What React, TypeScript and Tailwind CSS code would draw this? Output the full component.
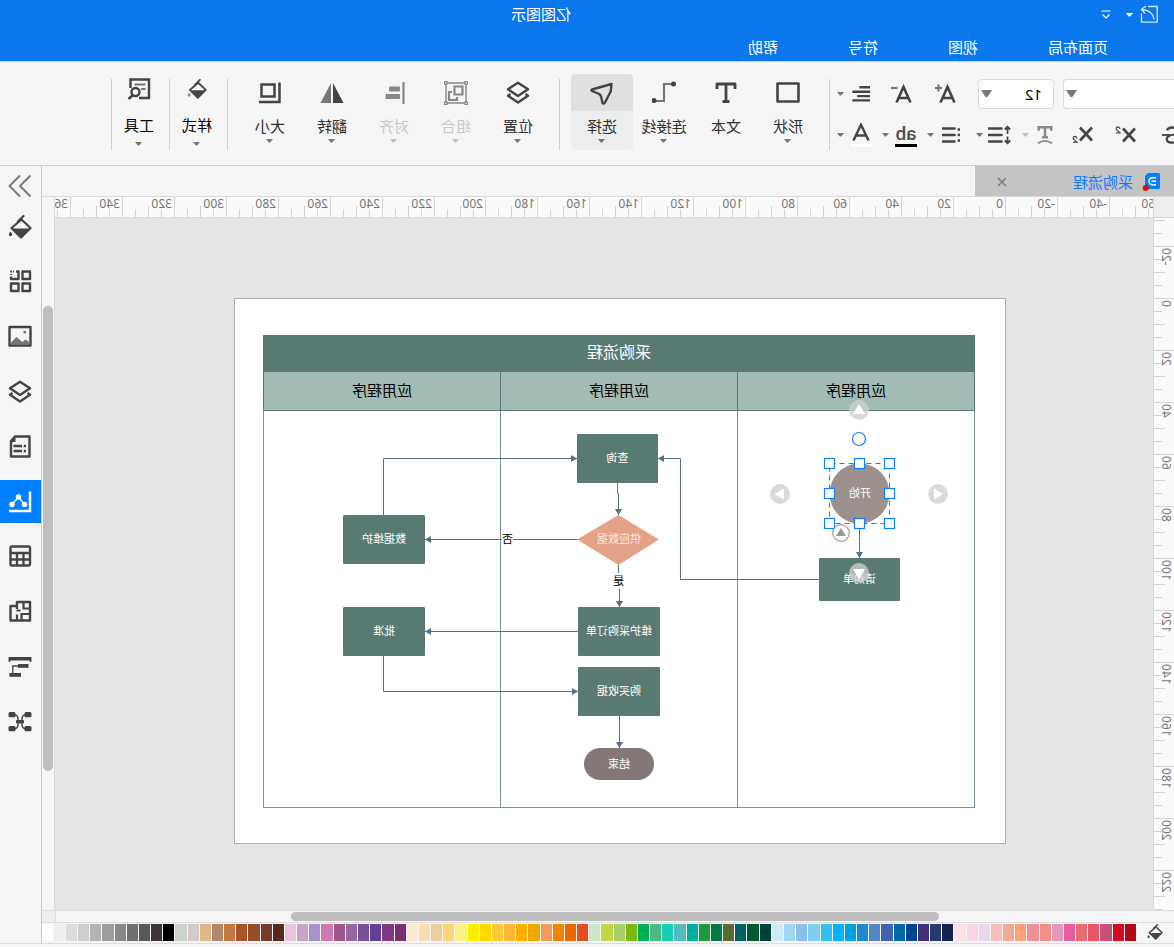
import type { ReactNode } from "react";

const INK = "#444444";
const GREY = "#888888";

function Icon({ className = "size-6", children }: { className?: string; children: ReactNode }) {
  return (
    <svg viewBox="0 0 24 24" className={className} fill="none" stroke={INK} strokeWidth="2.2" aria-hidden="true">
      {children}
    </svg>
  );
}

function Caret({ className = "text-[#777777]" }: { className?: string }) {
  return (
    <svg viewBox="0 0 7 4" className={`h-1 w-[7px] shrink-0 ${className}`} aria-hidden="true">
      <path d="M0 0h7L4.2 3.6H2.8z" fill="currentColor" />
    </svg>
  );
}

function CaretButton({ label, className, tone }: { label: string; className: string; tone?: string }) {
  return (
    <button aria-label={label} className={`flex h-6 w-[10px] items-center justify-center ${className}`}>
      <Caret className={tone} />
    </button>
  );
}

function Bucket({ className, drop = INK }: { className: string; drop?: string }) {
  return (
    <Icon className={className}>
      <path d="M10.5 4.5 20.5 13 11 22.500 1.500 13z" strokeLinejoin="round" />
      <path d="M2 13.500h18L11 22.500z" fill={INK} stroke="none" />
      <path d="M8.500 1l5.500 5.500" strokeLinecap="round" />
      <path d="M21.500 16.500c1.300 1.700 1.700 2.400 1.700 3.100a1.700 1.700 0 0 1-3.400 0c0-.7.400-1.400 1.700-3.100z" fill={drop} stroke="none" />
    </Icon>
  );
}

function Layers({ className = "size-6" }: { className?: string }) {
  return (
    <Icon className={className}>
      <path d="M12 1.700 22 8.300 12 14.900 2 8.300z" strokeWidth="2.400" strokeLinejoin="round" />
      <path d="M4.500 13 2 14.800l10 6.700 10-6.700-2.500-1.800" strokeWidth="2.400" strokeLinejoin="round" />
    </Icon>
  );
}

function Separator() {
  return <div className="mt-[17px] h-[71px] w-px shrink-0 bg-[#cfcfcf]" />;
}

type ToolProps = { label: string; icon: ReactNode; active?: boolean; disabled?: boolean; menu?: boolean };

function Tool({ label, icon, active, disabled, menu = true }: ToolProps) {
  return (
    <button
      disabled={disabled}
      className={`mt-3 flex h-[76px] w-[62px] shrink-0 flex-col items-center overflow-hidden rounded-sm text-[15px] leading-5 ${
        active ? "bg-[#ededed]" : ""
      } ${disabled ? "text-[#c8c8c8]" : "text-[#303030]"}`}
    >
      <span className={`flex h-[37px] w-full items-center justify-center ${active ? "bg-[#e0e0e0]" : ""}`}>{icon}</span>
      <span className="mt-[5px] whitespace-nowrap">{label}</span>
      {menu && (
        <span className="mt-[3px]">
          <Caret className={disabled ? "text-[#c0c0c0]" : "text-[#777777]"} />
        </span>
      )}
    </button>
  );
}

function SideTool({ label, icon }: { label: string; icon: ReactNode }) {
  return (
    <button className="mt-[15px] flex h-[73px] w-[57px] shrink-0 flex-col items-center pl-[3px] text-[15px] leading-5 text-black">
      <span className="flex h-6 items-center justify-center">{icon}</span>
      <span className="mt-[14px] whitespace-nowrap">{label}</span>
      <span className="mt-[7px]">
        <Caret />
      </span>
    </button>
  );
}

function FontPanel() {
  return (
    <div className="flex w-[344px] shrink-0 flex-col gap-[14px] pt-[17px]">
      <div className="flex h-[30px] items-center">
        <div className="relative">
          <select aria-label="字体" className="h-[30px] w-[111px] appearance-none rounded-r border border-l-0 border-[#d9d9e0] bg-white">
            <option> </option>
          </select>
          <svg viewBox="0 0 11 7" className="pointer-events-none absolute right-[3px] top-[11px] h-[7px] w-[11px]" aria-hidden="true">
            <path d="M0 0h11L6.500 7h-2z" fill="#777777" />
          </svg>
        </div>
        <div className="relative ml-[9px]">
          <select aria-label="字号" className="h-[30px] w-[76px] appearance-none rounded border border-[#d9d9e0] bg-white pl-[11px] text-[15px] text-black">
            <option>12</option>
          </select>
          <svg viewBox="0 0 11 7" className="pointer-events-none absolute right-[3px] top-[11px] h-[7px] w-[11px]" aria-hidden="true">
            <path d="M0 0h11L6.500 7h-2z" fill="#777777" />
          </svg>
        </div>
        <button aria-label="增大字号" className="ml-[20px] size-6">
          <Icon>
            <path d="M3.500 20.500 10.500 5l7 15.500M6 16h9" strokeWidth="2.600" />
            <path d="M19.500 2.500v7M16 6h7" stroke="#777777" />
          </Icon>
        </button>
        <button aria-label="减小字号" className="ml-[20px] size-6">
          <Icon>
            <path d="M3.500 20.500 10.500 5l7 15.500M6 16h9" strokeWidth="2.600" />
            <path d="M16.500 6H23" stroke="#777777" />
          </Icon>
        </button>
        <button aria-label="对齐方式" className="ml-[20px] size-[18px]">
          <Icon className="size-[18px]">
            <path d="M0 3h14M0 9h23.500M0 14.800h17M0 20.500h23.500" strokeWidth="3.200" />
          </Icon>
        </button>
        <CaretButton label="更多对齐方式" className="ml-[6px]" />
      </div>
      <div className="flex h-6 items-center">
        <button aria-label="删除线" className="-ml-2 size-5 shrink-0">
          <Icon className="size-5">
            <path d="M18 6.500C17 4 14.800 3 12 3 8.500 3 6 4.600 6 7.300c0 2.200 1.500 3.400 4 4.200M14 12.500c2.800.9 4.300 2 4.300 4.300 0 2.800-2.500 4.400-6 4.400-3.300 0-5.600-1.400-6.300-4" strokeWidth="2.800" />
            <path d="M0 12h24" />
          </Icon>
        </button>
        <button aria-label="上标" className="ml-[25px] h-6 w-[22px]">
          <svg viewBox="0 0 22 24" className="h-6 w-[22px]" aria-hidden="true">
            <path d="M2 5.500l12 13M14 5.500L2 18.500" stroke={INK} strokeWidth="2.600" />
            <path d="M17 6c.1-1.400 1-2 2-2s1.900.6 1.900 1.700c0 1.300-2 2.200-3.900 4.200h4" stroke="#555555" strokeWidth="1.300" fill="none" />
          </svg>
        </button>
        <button aria-label="下标" className="ml-[21px] h-6 w-[22px]">
          <svg viewBox="0 0 22 24" className="h-6 w-[22px]" aria-hidden="true">
            <path d="M2 4.500l12 13M14 4.500L2 17.500" stroke={INK} strokeWidth="2.600" />
            <path d="M17 15.500c.1-1.400 1-2 2-2s1.900.6 1.900 1.700c0 1.300-2 2.200-3.900 4.200h4" stroke="#555555" strokeWidth="1.300" fill="none" />
          </svg>
        </button>
        <button aria-label="文字效果" className="ml-[17px] size-5">
          <Icon className="size-5">
            <path d="M4.500 7V2.800h15V7M12 2.800V15.500M8.500 14.800h7" stroke={GREY} strokeWidth="3" />
            <path d="M3.500 22q8.500-6 17 0" stroke={GREY} strokeWidth="2.200" />
          </Icon>
        </button>
        <CaretButton label="更多文字效果" className="ml-[4px]" tone="text-[#c0c0c0]" />
        <button aria-label="行距" className="ml-[10px] h-6 w-[23px]">
          <svg viewBox="0 0 23 24" className="h-6 w-[23px]" fill="none" stroke={INK} aria-hidden="true">
            <path d="M9.500 5.500h12.500M9.500 12h12.500M9.500 18.500h12.500" strokeWidth="2.600" strokeLinecap="round" />
            <path d="M3.500 4v7M.8 6.500l2.700-2.700 2.700 2.700M3.500 13.500v7M.8 17.500l2.700 2.700 2.700-2.700" strokeWidth="1.800" />
          </svg>
        </button>
        <CaretButton label="更多行距" className="ml-[3px]" />
        <button aria-label="项目符号" className="ml-[15px] h-6 w-[18px]">
          <svg viewBox="0 0 18 24" className="h-6 w-[18px]" fill="none" stroke={INK} aria-hidden="true">
            <path d="M5.500 5.500h11.500M5.500 12h11.500M5.500 18.500h11.500" strokeWidth="2.600" strokeLinecap="round" />
            <path d="M0 6.500h2.400M0 12h2.400M0 17.500h2.400" strokeWidth="2.400" />
          </svg>
        </button>
        <CaretButton label="更多项目符号" className="ml-[6px]" />
        <button aria-label="文字背景色" className="ml-[9px] h-6 w-[22px] border-b-[3px] border-black font-['Roboto',sans-serif] text-[19px] font-medium leading-5 text-[#505050]">
          ab
        </button>
        <CaretButton label="更多背景色" className="ml-[4px]" />
        <button aria-label="文字颜色" className="ml-[9px] flex h-6 w-[22px] justify-center border-b-[3px] border-white">
          <Icon className="h-5 w-6">
            <path d="M3 21 12 2l9 19M6.500 15h11" strokeWidth="2.900" />
          </Icon>
        </button>
        <CaretButton label="更多文字颜色" className="ml-[4px]" />
      </div>
    </div>
  );
}

function Toolbar() {
  return (
    <div className="flex h-[105px] shrink-0 border-y border-[#cfcfcf] bg-[#f5f5f5]">
      <FontPanel />
      <Separator />
      <div className="flex shrink-0 pl-[10px] pr-2">
        <Tool label="形状" icon={<Icon><path d="M1.500 2.500h21v18h-21z" strokeWidth="2.600" strokeLinejoin="round" /></Icon>} />
        <Tool
          label="文本"
          menu={false}
          icon={<Icon><path d="M3 8V3h18v5M12 3v18M8.500 20.500h7" strokeWidth="2.800" strokeLinejoin="round" /></Icon>}
        />
        <Tool
          label="连接线"
          icon={
            <Icon>
              <path d="M3 3h9v17h9" stroke="#777777" />
              <circle cx="2.500" cy="3" r="2.500" fill={INK} stroke="none" />
              <circle cx="22" cy="19.500" r="2.500" fill={INK} stroke="none" />
            </Icon>
          }
        />
        <Tool
          label="选择"
          active
          icon={<Icon><path d="M2.500 3 22 8.500q1.300.8 0 1.500l-6 2.500q-2.400.8-3 2.800l-1.500 6.700q-1 1.300-2.200 0l-6-11.500z" strokeLinejoin="round" strokeWidth="2.400" /></Icon>}
        />
      </div>
      <div className="ml-[3px]">
        <Separator />
      </div>
      <div className="flex shrink-0 pl-[10px] pr-[11px]">
        <Tool label="位置" icon={<Layers />} />
        <Tool
          label="组合"
          disabled
          icon={
            <Icon>
              <path d="M2 2h20v20H2z" stroke={GREY} strokeWidth="1.400" />
              <path d="M5.500 5.500h8v8h-8z" stroke={GREY} />
              <path d="M16 11h3v8h-8v-3" stroke={GREY} />
              <g fill="#f5f5f5" stroke={GREY} strokeWidth="1.400">
                <circle cx="1.800" cy="1.800" r="1.500" />
                <circle cx="22.200" cy="1.800" r="1.500" />
                <circle cx="1.800" cy="22.200" r="1.500" />
                <circle cx="22.200" cy="22.200" r="1.500" />
              </g>
            </Icon>
          }
        />
        <Tool
          label="对齐"
          disabled
          icon={
            <Icon>
              <path d="M2.500 1v22" stroke={GREY} strokeWidth="2.200" />
              <rect x="6" y="5.500" width="11" height="5" rx="1" fill={GREY} stroke="none" />
              <rect x="6" y="13" width="14.500" height="5" rx="1" fill={GREY} stroke="none" />
            </Icon>
          }
        />
        <Tool
          label="翻转"
          icon={
            <Icon>
              <path d="M11 2v20H.5z" fill={INK} stroke="none" />
              <path d="M13 2v20h10.500z" fill="#777777" stroke="none" />
            </Icon>
          }
        />
        <Tool
          label="大小"
          icon={
            <Icon>
              <path d="M7.500 3.500h13v12h-13z" strokeWidth="2.500" />
              <path d="M2.500 1.500v19.500H23" strokeWidth="2.500" />
            </Icon>
          }
        />
      </div>
      <Separator />
      <SideTool label="样式" icon={<Bucket className="size-5" drop="#888888" />} />
      <Separator />
      <SideTool
        label="工具"
        icon={
          <Icon>
            <path d="M12 21H2V2.500h18.500V11" strokeWidth="2.400" />
            <path d="M5.500 7.500h11M5.500 12h4.500" stroke="#777777" />
            <circle cx="15.500" cy="15" r="4" strokeWidth="2.400" />
            <path d="M18 18l4.500 4" strokeWidth="2.600" />
          </Icon>
        }
      />
      <Separator />
    </div>
  );
}

const UNIT = 51.95;
const QUARTERS = Array.from({ length: 160 }, (_, i) => i - 12);

function hasLabel(quarter: number, first: number, last: number) {
  const value = quarter * 5;
  return quarter % 4 === 0 && value >= first && value <= last;
}

function HorizontalRuler() {
  return (
    <div className="relative h-[21px] overflow-x-clip border-b border-[#d9d9d9] bg-[#fafafa]">
      {QUARTERS.map((q) => {
        const x = Math.round(147 + (q * UNIT) / 4);
        return (
          <div key={q} className="absolute inset-y-0 flex items-end" style={{ left: x }}>
            <div className={`w-px bg-[#d4d4d4] ${q % 4 === 0 ? "h-5" : q % 2 === 0 ? "h-[11px]" : "h-2"}`} />
            {hasLabel(q, -60, 360) && <span className="self-start pl-0.5 text-xs leading-[14px] text-[#777777]">{q * 5}</span>}
          </div>
        );
      })}
    </div>
  );
}

function VerticalRuler() {
  return (
    <div className="relative overflow-y-clip border-r border-[#d9d9d9] bg-[#fafafa]">
      {QUARTERS.map((q) => (
        <div key={q} className="absolute inset-x-0 flex flex-col items-end" style={{ top: 80 + q * 13 }}>
          <div className={`h-px bg-[#d4d4d4] ${q % 4 === 0 ? "w-5" : q % 2 === 0 ? "w-[11px]" : "w-2"}`} />
          {hasLabel(q, -20, 220) && (
            <span className="mt-px rotate-180 self-start text-xs leading-4 text-[#777777] [writing-mode:vertical-rl]">{q * 5}</span>
          )}
        </div>
      ))}
    </div>
  );
}

const NODES = [
  { text: "请购单", box: "left-[105px] top-[259px] h-[43px] w-[81px]" },
  { text: "查询", box: "left-[347px] top-[135px] h-[49px] w-[81px]" },
  { text: "维护采购订单", box: "left-[345px] top-[308px] h-[49px] w-[82px]" },
  { text: "购买收据", box: "left-[345px] top-[368px] h-[49px] w-[82px]" },
  { text: "数据维护", box: "left-[580px] top-[216px] h-[49px] w-[82px]" },
  { text: "批准", box: "left-[580px] top-[308px] h-[49px] w-[82px]" },
];

const HANDLES = [
  [115.5, 164.5], [145.5, 164.5], [175.5, 164.5],
  [115.5, 194.5], [175.5, 194.5],
  [115.5, 224.5], [145.5, 224.5], [175.5, 224.5],
];

function Diagram() {
  return (
    <div className="absolute left-[147px] top-[80px] h-[546px] w-[772px] border border-[#b0b0b0] bg-white">
      <div className="absolute left-[30px] top-[36px] flex h-[473px] w-[712px] flex-col">
        <div className="flex h-[37px] items-center justify-center bg-[#597a72] pb-1 text-base text-white">采购流程</div>
        <div className="grid flex-1 grid-cols-[238px_237px_1fr]">
          {[0, 1, 2].map((lane) => (
            <div key={lane} className="flex flex-col">
              <div className={`flex h-[39px] items-center justify-center border-b border-r border-[#597a72] bg-[#a2bcb5] pb-px text-[15px] text-black ${lane === 0 ? "border-l" : ""}`}>
                应用程序
              </div>
              <div className={`flex-1 border-b border-r border-[#7593a8] ${lane === 0 ? "border-l" : ""}`} />
            </div>
          ))}
        </div>
      </div>
      <svg className="absolute left-0 top-0" width="770" height="544" fill="none" stroke="#557085" aria-hidden="true">
        <defs>
          <marker id="arrow" viewBox="0 0 6 8" refX="6" refY="4" markerWidth="6" markerHeight="8" orient="auto">
            <path d="M0 .5 6 4 0 7.500z" fill="#557085" stroke="none" />
          </marker>
        </defs>
        <path d="M145.500 225V259" markerEnd="url(#arrow)" />
        <path d="M186 280.500H324.500V159.500H347" markerEnd="url(#arrow)" />
        <path d="M387.500 184V194.500H386.500V216" markerEnd="url(#arrow)" />
        <path d="M386.500 266V290H385.500V308" markerEnd="url(#arrow)" />
        <path d="M427 240.500H580" markerEnd="url(#arrow)" />
        <path d="M427 332.500H580" markerEnd="url(#arrow)" />
        <path d="M621.500 216V159.500H428" markerEnd="url(#arrow)" />
        <path d="M621.500 357V392.500H427" markerEnd="url(#arrow)" />
        <path d="M385.500 417V449" markerEnd="url(#arrow)" />
        <path d="M346 240.500 386.500 216 428 240.500 386.500 266z" fill="#e4a388" stroke="none" />
        <circle cx="145.500" cy="194.500" r="30" fill="#9c918c" stroke="none" />
      </svg>
      {NODES.map((node) => (
        <div key={node.text} className={`absolute flex items-center justify-center whitespace-nowrap rounded-[1px] bg-[#597a72] text-[11px] text-white ${node.box}`}>
          {node.text}
        </div>
      ))}
      <div className="absolute left-[345px] top-[216px] flex h-[49px] w-[82px] items-center justify-center text-[11px] text-[#fae6de]">供应数据</div>
      <div className="absolute left-[351px] top-[449px] flex h-[32px] w-[70px] items-center justify-center rounded-full bg-[#837877] text-[11px] text-white">结束</div>
      <div className="absolute left-[115px] top-[164px] flex size-[60px] items-center justify-center text-[11px] text-white">开始</div>
      <div className="absolute left-[492px] top-[232px] bg-white text-[11px] leading-4 text-black">否</div>
      <div className="absolute left-[381px] top-[274px] bg-white text-[11px] leading-4 text-black">是</div>
      <svg className="absolute left-0 top-0" width="770" height="544" fill="none" aria-hidden="true">
        <rect x="115.500" y="164.500" width="60" height="60" stroke="#0a80ff" strokeDasharray="5 4" />
        <g fill="#ffffff" stroke="#0a80ff">
          {HANDLES.map(([x, y]) => (
            <rect key={`${x}-${y}`} x={x - 5} y={y - 5} width="10" height="10" strokeWidth="1.200" />
          ))}
          <circle cx="146" cy="140" r="6.500" strokeWidth="1.200" />
        </g>
        <g fill="#cfcfcf" fillOpacity="0.78">
          <circle cx="146" cy="111" r="10" />
          <circle cx="225" cy="195" r="10" />
          <circle cx="67" cy="195" r="10" />
          <circle cx="146" cy="274" r="10" />
        </g>
        <g fill="#ffffff">
          <path d="M146 105l6 10h-12z" />
          <path d="M230.500 195l-9.500-5.500v11z" />
          <path d="M61.500 195l9.500-5.500v11z" />
          <path d="M146 280.500l6-10.500h-12z" />
        </g>
        <circle cx="164" cy="234" r="8.300" fill="#ffffff" stroke="#999999" strokeWidth="1.200" />
        <path d="M164 229l5 8h-10z" fill="#999999" />
      </svg>
    </div>
  );
}

const SIDEBAR: { label: string; active?: boolean; icon: ReactNode }[] = [
  { label: "填充", icon: <Bucket className="size-6" /> },
  {
    label: "图形库",
    icon: (
      <Icon>
        <path d="M2 1.500h7.500v7.500H2zM2 13.500h7.500v7.500H2zM13.500 13.500H21v7.500h-7.500zM16 1.500h-2.500v7.500H21V6.500" strokeWidth="2.400" strokeLinejoin="round" />
        <path d="M18 1.500h1M21 .5v2M21 4v1" strokeWidth="1.800" />
      </Icon>
    ),
  },
  {
    label: "图片",
    icon: (
      <Icon>
        <path d="M1.500 2h21v18.500h-21z" strokeWidth="2.400" strokeLinejoin="round" />
        <path d="M3 19v-2l3.500-2.500L9.500 17l6-5 6.500 6.500v.5z" fill="#777777" stroke="none" />
        <path d="M6 6h2.500v2.500H6z" fill="#777777" stroke="none" />
      </Icon>
    ),
  },
  { label: "图层", icon: <Layers /> },
  {
    label: "注释",
    icon: (
      <Icon>
        <path d="M2.500 1.500H17l4 4.500v15.500H2.500z" strokeWidth="2.400" strokeLinejoin="round" />
        <path d="M16.500 1.500v5.500H22z" fill={INK} stroke="none" />
        <path d="M10 11h8.500M10 16h8.500M6 11h2.200M6 16h2.200" strokeWidth="2.400" />
      </Icon>
    ),
  },
  {
    label: "图表",
    active: true,
    icon: (
      <svg viewBox="0 0 24 24" className="size-6" fill="none" stroke="#ffffff" aria-hidden="true">
        <path d="M2 1.500v19.500h21" strokeWidth="2.500" />
        <path d="M7.500 14.500 13.500 7l6.500 7.500" strokeWidth="1.400" />
        <g fill="#ffffff" stroke="none">
          <circle cx="7.500" cy="14.500" r="2.700" />
          <circle cx="13.500" cy="7" r="2.700" />
          <circle cx="20" cy="14.500" r="2.700" />
        </g>
      </svg>
    ),
  },
  {
    label: "表格",
    icon: (
      <Icon>
        <rect x="2" y="1.500" width="19.500" height="19" rx="1.500" strokeWidth="2.400" />
        <path d="M2 8h19.500M2 14.500h19.500M8.500 8v12.500M15 8v12.500" strokeWidth="2.300" />
      </Icon>
    ),
  },
  {
    label: "平面图",
    icon: (
      <Icon>
        <path d="M2 2h13v4h6.500v14.500H2z" strokeWidth="2.400" strokeLinejoin="round" />
        <path d="M2 8.500h6.500V2M2 14h8.500v6.500M15 14.500v6M15 6v3M11.500 10.500h4" strokeWidth="2.200" />
      </Icon>
    ),
  },
  {
    label: "甘特图",
    icon: (
      <Icon>
        <path d="M1 2.500h22v3.800h-1V5H2v1.300H1z" fill={INK} strokeWidth="1" />
        <rect x="3.500" y="9" width="10.500" height="3.800" fill={INK} stroke="none" />
        <rect x="11" y="18" width="11.500" height="3.800" fill={INK} stroke="none" />
        <path d="M13 11h6.200V18.500" strokeWidth="1.300" />
      </Icon>
    ),
  },
  {
    label: "思维导图",
    icon: (
      <Icon>
        <g fill={INK} stroke="none">
          <rect x=".5" y="2" width="7" height="5.300" rx="1.500" />
          <rect x="16.500" y="2" width="7" height="5.300" rx="1.500" />
          <rect x=".5" y="16" width="7" height="5.300" rx="1.500" />
          <rect x="16.500" y="16" width="7" height="5.300" rx="1.500" />
          <rect x="8" y="10" width="8" height="3.500" rx="1" />
        </g>
        <path d="M6 5h1.500q3 .5 2.500 6.700.5 6.300-2.500 6.800H6M18 5h-1.500q-3 .5-2.500 6.700-.5 6.300 2.500 6.800H18" strokeWidth="1.400" />
      </Icon>
    ),
  },
];

function Sidebar() {
  return (
    <nav className="flex w-[42px] shrink-0 flex-col border-l border-[#c8c8c8] bg-[#f5f5f5]">
      <button aria-label="收起" className="flex h-[39px] items-center justify-center">
        <Icon>
          <path d="M1.500 1.500 12 12 1.500 22.500M12 1.500 22.500 12 12 22.500" stroke="#777777" strokeWidth="1.900" />
        </Icon>
      </button>
      <div className="flex flex-col gap-3">
        {SIDEBAR.map((item) => (
          <button key={item.label} aria-label={item.label} className={`flex h-[43px] items-center justify-center ${item.active ? "bg-[#0080ff]" : ""}`}>
            {item.icon}
          </button>
        ))}
      </div>
    </nav>
  );
}

const PALETTE = [
  "#b40818", "#d50a20", "#c95078", "#e95566", "#ea6b72", "#e65e9e", "#e298b9", "#f08e88", "#f18e9c", "#ff9f78",
  "#eeaa94", "#f6bdbb", "#ebd6ea", "#fdd3e6", "#fde0e6", "#10234e", "#243a70", "#472e78", "#004590", "#0069a8",
  "#4062b0", "#5585c8", "#1e88d2", "#00a0e9", "#00b4ff", "#30c0f0", "#7ecef4", "#89bfe8", "#a1d8ef", "#cdeaf6",
  "#004238", "#005a31", "#006161", "#586a30", "#007a47", "#1f9640", "#00ae9c", "#52bcc1", "#18ccb5", "#49bb80",
  "#00b058", "#7db80e", "#a5d06a", "#c0d845", "#cde7c8", "#e24e20", "#ec6600", "#f08300", "#f39b54", "#f2a600",
  "#ffae00", "#fdb838", "#fbcb36", "#ffd800", "#ffed00", "#fcf283", "#ffd474", "#eccd9c", "#fddcae", "#fde8d0",
  "#78306e", "#803a82", "#653d97", "#745298", "#97659f", "#9d5889", "#cb79b0", "#a990ce", "#c7a3c8", "#ebc1dc",
  "#5c271b", "#783a30", "#974d2a", "#a95426", "#c2783f", "#b5856d", "#deb887", "#d3cac5", "#cbd3cc", "#000000",
  "#3f3636", "#5a5758", "#707070", "#888888", "#9d9f9e", "#b3b5b4", "#cdcfcd", "#dcdcdc", "#eeeeee", "#ffffff",
];

function Palette() {
  return (
    <div className="flex h-5 shrink-0 items-start bg-[#f5f5f5] pt-px">
      <button aria-label="填充颜色" className="flex w-[38px] shrink-0 justify-center">
        <Bucket className="size-4" />
      </button>
      <div className="flex h-[17px] flex-1 gap-px">
        {PALETTE.map((color) => (
          <button key={color} aria-label={color} className="h-full flex-1" style={{ backgroundColor: color }} />
        ))}
      </div>
    </div>
  );
}

function Header() {
  return (
    <header className="shrink-0 bg-[#0a77ec] text-[15px] text-white">
      <div className="flex h-[29px] items-center">
        <div className="flex w-[92px] shrink-0 items-center">
          <button aria-label="导出" className="ml-[15px] size-[19px]">
            <svg viewBox="0 0 19 19" className="size-[19px]" fill="none" stroke="#d5e8fd" strokeWidth="1.300" aria-hidden="true">
              <path d="M11 1.500H1.800v15.700h15.700V8.500" />
              <path d="M5 14.500C5.500 9 9 5.500 16.500 4.500M13 1l4.500 3.300L14 8.500" />
            </svg>
          </button>
          <button aria-label="更多导出" className="ml-[5px] flex w-[10px] justify-center">
            <Caret className="text-white" />
          </button>
          <button aria-label="自定义工具栏" className="ml-[13px] w-3">
            <svg viewBox="0 0 12 12" className="size-3" fill="none" stroke="#ffffff" strokeWidth="1.200" aria-hidden="true">
              <path d="M1.500 2h9M2.500 5.500 6 9 9.500 5.500" />
            </svg>
          </button>
        </div>
        <h1 className="flex-1 text-center">亿图图示</h1>
      </div>
      <nav className="flex h-8 items-center gap-[70px] pl-[66px] pt-1">
        {["页面布局", "视图", "符号", "帮助"].map((item) => (
          <button key={item} className="whitespace-nowrap">{item}</button>
        ))}
      </nav>
    </header>
  );
}

function TabBar() {
  return (
    <div className="flex h-[31px] shrink-0 border-b border-[#d9d9d9] bg-[#f5f5f5]">
      <div className="flex w-[199px] items-center bg-[#c4c4c4] pl-[14px] pr-[22px] pt-0.5 text-[15px] text-[#0a7cff]">
        <svg viewBox="0 0 18 18" className="size-[18px] shrink-0" aria-hidden="true">
          <path d="M1.500 0H12l3 3v13H1.500A1.500 1.500 0 0 1 0 14.500v-13A1.500 1.500 0 0 1 1.500 0z" fill="#0080ff" />
          <path d="M4 4.800h3.500a3.300 3.300 0 0 1 0 7H4M4 8.300h4.500" fill="none" stroke="#ffffff" strokeWidth="1.500" />
          <circle cx="14.300" cy="15" r="3" fill="#ff0000" />
        </svg>
        <span className="ml-[9px] flex-1 whitespace-nowrap">采购流程</span>
        <button aria-label="关闭" className="size-[10px]">
          <svg viewBox="0 0 10 10" className="size-[10px]" stroke="#777777" strokeWidth="1.300" aria-hidden="true">
            <path d="M1 1l8 8M9 1L1 9" />
          </svg>
        </button>
      </div>
    </div>
  );
}

export default function App() {
  return (
    <div className="flex h-screen min-h-[760px] -scale-x-100 flex-col overflow-hidden bg-[#f5f5f5] font-['Noto_Sans','Noto_Sans_CJK_SC',sans-serif]">
      <Header />
      <Toolbar />
      <div className="flex min-h-0 flex-1">
        <main className="flex min-w-0 flex-1 flex-col">
          <TabBar />
          <div className="grid min-h-0 flex-1 grid-cols-[21px_1fr_13px]">
            <div className="grid min-h-0 grid-rows-[21px_1fr]">
              <div className="border-b border-r border-[#d9d9d9] bg-[#eeeeee]" />
              <VerticalRuler />
            </div>
            <div className="grid min-h-0 min-w-0 grid-rows-[21px_1fr]">
              <HorizontalRuler />
              <div className="relative overflow-hidden bg-[#e5e5e5]">
                <Diagram />
              </div>
            </div>
            <div className="border-l border-[#d9d9d9] px-px pt-[109px]">
              <div className="h-[465px] rounded-full bg-[#bebebe]" />
            </div>
          </div>
          <div className="flex h-[13px] shrink-0 border-y border-[#dcdcdc]">
            <div className="flex-1 py-px pl-[235px]">
              <div className="h-[9px] w-[648px] rounded-full bg-[#bebebe]" />
            </div>
            <div className="w-[14px] border-l border-[#dcdcdc] bg-[#eeeeee]" />
          </div>
          <Palette />
        </main>
        <Sidebar />
      </div>
      <div className="h-1 shrink-0 border-t border-[#dcdcdc]" />
    </div>
  );
}
